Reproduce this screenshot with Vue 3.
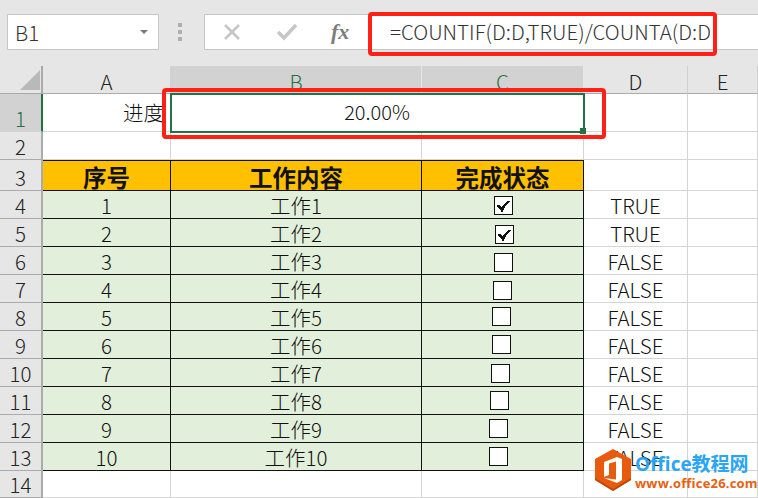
<script setup>
const colLetters = ['A', 'B', 'C', 'D', 'E']
const tasks = [
  { n: 4, id: 1, d: 'TRUE', x: 72, y: 5, on: true },
  { n: 5, id: 2, d: 'TRUE', x: 73, y: 6, on: true },
  { n: 6, id: 3, d: 'FALSE', x: 72, y: 6 },
  { n: 7, id: 4, d: 'FALSE', x: 71, y: 6 },
  { n: 8, id: 5, d: 'FALSE', x: 70, y: 4 },
  { n: 9, id: 6, d: 'FALSE', x: 70, y: 4 },
  { n: 10, id: 7, d: 'FALSE', x: 69, y: 5 },
  { n: 11, id: 8, d: 'FALSE', x: 68, y: 4 },
  { n: 12, id: 9, d: 'FALSE', x: 67, y: 4 },
  { n: 13, id: 10, d: 'FALSE', x: 67, y: 4 }
]
</script>

<template>
  <div class="app">
    <div class="toolbar">
      <div class="namebox">
        <span>B1</span>
        <i class="caret"></i>
      </div>
      <div class="grip"><i></i><i></i><i></i></div>
      <div class="buttons">
        <svg width="20" height="20" viewBox="0 0 20 20" class="btn-x">
          <path d="M3 3 L17 17 M17 3 L3 17" stroke="#c6c6c6" stroke-width="2.6" fill="none" />
        </svg>
        <svg width="22" height="20" viewBox="0 0 22 20" class="btn-ok">
          <path d="M2 10 L8 16 L20 3" stroke="#c6c6c6" stroke-width="3.6" fill="none" />
        </svg>
        <span class="fx">fx</span>
      </div>
      <div class="formula">=COUNTIF(D:D,TRUE)/COUNTA(D:D</div>
    </div>

    <div class="sheet">
      <div class="head corner"><i class="tri"></i></div>
      <div
        v-for="c in colLetters"
        :key="c"
        class="head col"
        :class="{ active: c === 'B' || c === 'C' }"
      >{{ c }}</div>

      <div class="head row active-row">1</div>
      <div class="cell right">进度</div>
      <div class="cell merged">20.00%</div>
      <div class="cell"></div>
      <div class="cell"></div>

      <div class="head row">2</div>
      <div class="cell"></div>
      <div class="cell"></div>
      <div class="cell"></div>
      <div class="cell"></div>
      <div class="cell"></div>

      <div class="head row">3</div>
      <div class="cell th">序号</div>
      <div class="cell th">工作内容</div>
      <div class="cell th">完成状态</div>
      <div class="cell"></div>
      <div class="cell"></div>

      <template v-for="t in tasks" :key="t.n">
        <div class="head row">{{ t.n }}</div>
        <div class="cell td">{{ t.id }}</div>
        <div class="cell td">工作{{ t.id }}</div>
        <div class="cell td check-cell">
          <span class="box" :style="{ left: t.x + 'px', top: t.y + 'px' }">
            <svg v-if="t.on" width="13" height="12" viewBox="0 0 13 12" shape-rendering="crispEdges">
              <path d="M0 5 H3 V6 H4 V7 H5 V6 H6 V5 H7 V4 H8 V3 H9 V2 H10 V1 H13 V2 H12 V3 H11 V4 H10 V5 H9 V6 H8 V8 H7 V10 H6 V12 H4 V10 H3 V9 H2 V8 H1 V7 H0 Z" fill="#111" />
            </svg>
          </span>
        </div>
        <div class="cell val">{{ t.d }}</div>
        <div class="cell"></div>
      </template>

      <div class="head row">14</div>
      <div class="cell"></div>
      <div class="cell"></div>
      <div class="cell"></div>
      <div class="cell"></div>
      <div class="cell"></div>
    </div>

    <div class="selection"><i class="handle"></i></div>
    <div class="mark mark-formula"></div>
    <div class="mark mark-cell"></div>

    <div class="watermark">
      <svg width="36" height="42" viewBox="0 0 36 42" class="logo">
        <path d="M18 0 L36 10 V31 L18 42 L0 31 V10 Z" fill="#e85a0c" />
        <path d="M0 31 L18 42 L36 31 V29 L18 40 L0 29 Z" fill="#b9480a" />
        <path d="M9 13 L22 8 L27 10 V31 L22 34 L9 29 L21 30.5 V12.5 L14 14.5 V26 L9 28 Z" fill="#fff" />
      </svg>
      <div class="wm-text">
        <div class="wm-top">Office教程网</div>
        <div class="wm-url">www.office26.com</div>
      </div>
    </div>
  </div>
</template>

<style scoped>
.app {
  position: relative;
  width: 758px;
  height: 498px;
  overflow: hidden;
  background: #fff;
  font-family: "Noto Sans CJK SC", "Noto Sans", sans-serif;
  font-weight: 300;
  color: #111;
  font-size: 20.5px;
}
.toolbar {
  height: 66px;
  box-sizing: border-box;
  padding: 14px 0 16px 7px;
  background: #e6e6e6;
  display: flex;
  align-items: stretch;
}
.namebox {
  width: 152px;
  box-sizing: border-box;
  background: #fff;
  border: 1px solid #c6c6c6;
  display: flex;
  align-items: center;
  justify-content: space-between;
  padding: 0 10px 0 7px;
  color: #333;
}
.caret {
  width: 0;
  height: 0;
  border-left: 4px solid transparent;
  border-right: 4px solid transparent;
  border-top: 4px solid #777;
}
.grip {
  width: 45px;
  padding-right: 3px;
  box-sizing: border-box;
  display: flex;
  flex-direction: column;
  align-items: center;
  justify-content: center;
  gap: 3px;
}
.grip i {
  width: 4px;
  height: 4px;
  background: #aeaeae;
}
.buttons {
  width: 165px;
  box-sizing: border-box;
  background: #fff;
  border: 1px solid #c6c6c6;
  border-right: none;
  display: flex;
  align-items: center;
  padding-left: 17px;
}
.btn-ok {
  margin-left: 34px;
}
.fx {
  margin-left: 33px;
  font: italic bold 22px "Liberation Serif", serif;
  color: #7d7d7d;
}
.formula {
  flex: 1;
  box-sizing: border-box;
  background: #fff;
  border: 1px solid #c6c6c6;
  border-right: none;
  padding-left: 20px;
  line-height: 33px;
  color: #333;
  white-space: nowrap;
  overflow: hidden;
}
.sheet {
  display: grid;
  grid-template-columns: 43px 128px 251px 162px 104px 70px;
  grid-template-rows: 28px 38px 28px 31px repeat(10, 28px) 27px;
}
.head {
  background: #e6e6e6;
  box-sizing: border-box;
  border-right: 2px solid #ababab;
  border-bottom: 1px solid #ababab;
  line-height: 1;
  display: flex;
  justify-content: center;
  align-items: flex-end;
  padding-bottom: 3px;
  color: #222;
}
.corner {
  position: relative;
}
.tri {
  position: absolute;
  right: 1px;
  bottom: 3px;
  border-left: 20px solid transparent;
  border-bottom: 20px solid #b9b9b9;
}
.col {
  border-right: 1px solid #d0d0d0;
  border-bottom-color: #ababab;
  padding-bottom: 2px;
}
.col.active {
  background: #d2d2d2;
  color: #217346;
  border-right-color: #e6e6e6;
}
.active-row {
  background: #d2d2d2;
  color: #217346;
  border-right: 2px solid #217346;
  border-bottom-color: #d4d4d4;
}
.cell {
  box-sizing: border-box;
  border-right: 1px solid #d4d4d4;
  border-bottom: 1px solid #d4d4d4;
  display: flex;
  align-items: flex-end;
  justify-content: center;
  line-height: 1;
  padding-bottom: 3px;
  white-space: nowrap;
  min-width: 0;
}
.right {
  justify-content: flex-end;
  padding: 0 6px 9px 0;
  overflow: hidden;
}
.merged {
  grid-column: span 2;
  padding-bottom: 9px;
  font-size: 20px;
}
.th,
.td {
  border-right: 1px solid #111;
  border-bottom: 1px solid #111;
}
.th {
  background: #ffc000;
  border-top: 1px solid #111;
  font-weight: 700;
  color: #111;
  font-size: 23.5px;
  padding-bottom: 1px;
}
.td {
  background: #e2efda;
}
.check-cell {
  position: relative;
}
.box {
  position: absolute;
  width: 19px;
  height: 19px;
  box-sizing: border-box;
  border: 1px solid #111;
  background: #fff;
  display: flex;
  align-items: center;
  justify-content: center;
}
.selection {
  position: absolute;
  left: 170px;
  top: 93px;
  width: 415px;
  height: 40px;
  box-sizing: border-box;
  border: 2px solid #217346;
}
.handle {
  position: absolute;
  right: -3px;
  bottom: -3px;
  width: 6px;
  height: 6px;
  background: #217346;
}
.mark {
  position: absolute;
  box-sizing: border-box;
  border: 4px solid #ff2016;
  border-radius: 4px;
}
.mark-formula {
  left: 368px;
  top: 12px;
  width: 349px;
  height: 44px;
}
.mark-cell {
  left: 162px;
  top: 88px;
  width: 444px;
  height: 51px;
}
.watermark {
  position: absolute;
  left: 595px;
  top: 449px;
  display: flex;
  gap: 4px;
}
.wm-top {
  font: 700 19px/22px "Open Sans", "Noto Sans CJK SC", sans-serif;
  color: #2aa5f5;
  margin-top: 4px;
  white-space: nowrap;
}
.wm-url {
  font: 700 13px/16px "Open Sans", sans-serif;
  letter-spacing: 0.2px;
  color: #e8610f;
  white-space: nowrap;
}
</style>
